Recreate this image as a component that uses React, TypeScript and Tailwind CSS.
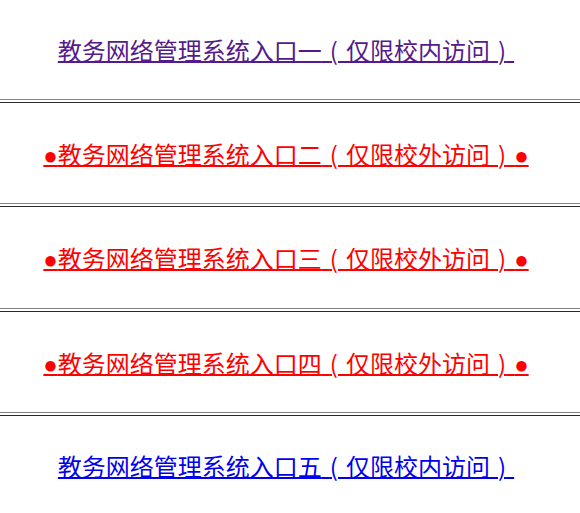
import React from "react";

type Entry = { label: string; tail: string; color: string; bullet: boolean; h: string };

const entries: Entry[] = [
  { label: "教务网络管理系统入口一", tail: "仅限校内访问", color: "text-[#551a8b]", bullet: false, h: "h-[99px]" },
  { label: "教务网络管理系统入口二", tail: "仅限校外访问", color: "text-[#ff0000]", bullet: true, h: "h-[101px]" },
  { label: "教务网络管理系统入口三", tail: "仅限校外访问", color: "text-[#ff0000]", bullet: true, h: "h-[101px]" },
  { label: "教务网络管理系统入口四", tail: "仅限校外访问", color: "text-[#ff0000]", bullet: true, h: "h-[101px]" },
  { label: "教务网络管理系统入口五", tail: "仅限校内访问", color: "text-[#0000ee]", bullet: false, h: "h-[97px]" },
];

function Rule() {
  return <div className="h-[4px] w-full border-t border-b border-t-[#808080] border-b-[#2a2a2a]" />;
}

// Bracket centred in a one-em slot (three-per-em spaces either side)
function Bracket({ ch }: { ch: string }) {
  return (
    <>
      {"\u2004"}
      <span className="font-['Noto_Sans_CJK_SC',sans-serif]">{ch}</span>
      {"\u2004"}
    </>
  );
}

export default function App() {
  return (
    <div className="w-[580px] h-[513px] bg-white flex flex-col font-['Liberation_Sans','Noto_Sans_CJK_SC',sans-serif]">
      {entries.map((e, i) => (
        <React.Fragment key={i}>
          {i > 0 && <Rule />}
          <div className={`${e.h} flex items-center justify-center pt-[4px] pr-[8px]`}>
            <a href="#" className={`${e.color} text-[24px] leading-[28px] underline decoration-2 whitespace-pre`}>
              {e.bullet ? "●" : ""}
              {e.label}
              <Bracket ch="(" />
              {e.tail}
              <Bracket ch=")" />
              {e.bullet ? "●" : ""}
            </a>
          </div>
        </React.Fragment>
      ))}
    </div>
  );
}
